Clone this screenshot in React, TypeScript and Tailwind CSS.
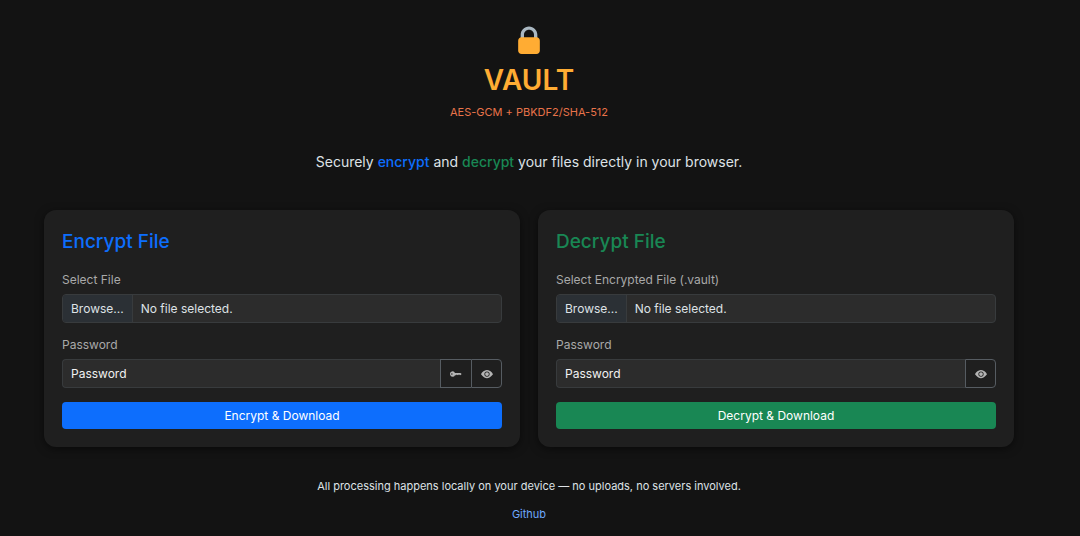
import { useState } from 'react';
import { BsEyeFill, BsKeyFill } from 'react-icons/bs';

export default function App() {
  return (
    <div className="min-h-screen bg-[#131313] pt-6 pr-[66px] pl-11 font-['Inter',sans-serif] text-[#dee2e6]">
      <header className="flex flex-col items-center text-center">
        <LockIcon />
        <h1 className="mt-2 text-[28px] leading-9 font-semibold text-[#ffac33]">VAULT</h1>
        <p className="mt-1 text-[11px] leading-5 text-[#e8734a]">AES-GCM + PBKDF2/SHA-512</p>
        <p className="mt-7 text-[14px] leading-6">
          Securely <span className="font-medium text-[#0d6efd]">encrypt</span> and{' '}
          <span className="font-medium text-[#198754]">decrypt</span> your files directly in your browser.
        </p>
      </header>

      <main className="mt-9 grid grid-cols-2 gap-[18px]">
        <Card title="Encrypt File" titleClass="text-[#0d6efd]">
          <FileField id="encrypt-file" label="Select File" />
          <PasswordField id="encrypt-password" canGenerate />
          <button type="submit" className="mt-[14px] h-[27px] w-full rounded bg-[#0d6efd] text-[12px] text-white">
            Encrypt &amp; Download
          </button>
        </Card>
        <Card title="Decrypt File" titleClass="text-[#198754]">
          <FileField id="decrypt-file" label="Select Encrypted File (.vault)" />
          <PasswordField id="decrypt-password" />
          <button type="submit" className="mt-[14px] h-[27px] w-full rounded bg-[#198754] text-[12px] text-white">
            Decrypt &amp; Download
          </button>
        </Card>
      </main>

      <footer className="mt-[29px] flex flex-col items-center gap-2 text-center">
        <p className="text-[11px] leading-5">
          All processing happens locally on your device — no uploads, no servers involved.
        </p>
        <a href="#github" className="text-[11px] leading-5 text-[#6ea8fe]">
          Github
        </a>
      </footer>
    </div>
  );
}

function Card({ title, titleClass, children }: { title: string; titleClass: string; children: React.ReactNode }) {
  return (
    <form
      onSubmit={(e) => e.preventDefault()}
      className="rounded-xl bg-[#1f1f1f] p-[18px] shadow-[0_2px_8px_rgba(0,0,0,0.5)]"
    >
      <h2 className={`mb-[14px] text-[19px] leading-7 font-medium ${titleClass}`}>{title}</h2>
      {children}
    </form>
  );
}

function FileField({ id, label }: { id: string; label: string }) {
  const [fileName, setFileName] = useState('');

  return (
    <div className="relative">
      <label htmlFor={id} className="mb-1 block text-[12px] leading-5 text-[#a9a9a9]">
        {label}
      </label>
      <input
        id={id}
        type="file"
        className="sr-only"
        onChange={(e) => setFileName(e.target.files?.[0]?.name ?? '')}
      />
      <label
        htmlFor={id}
        className="flex h-[29px] items-stretch overflow-hidden rounded border border-[#383b3d] bg-[#2c2c2c] text-[12px]"
      >
        <span className="flex items-center border-r border-[#383b3d] bg-[#2b3035] px-2">Browse...</span>
        <span className="flex items-center px-2">{fileName || 'No file selected.'}</span>
      </label>
    </div>
  );
}

function PasswordField({ id, canGenerate }: { id: string; canGenerate?: boolean }) {
  const [password, setPassword] = useState('');
  const [visible, setVisible] = useState(false);

  const generate = () => {
    const bytes = crypto.getRandomValues(new Uint8Array(18));
    setPassword(btoa(String.fromCharCode(...bytes)));
  };

  return (
    <div className="mt-3">
      <label htmlFor={id} className="mb-1 block text-[12px] leading-5 text-[#a9a9a9]">
        Password
      </label>
      <div className="flex h-[29px]">
        <input
          id={id}
          type={visible ? 'text' : 'password'}
          value={password}
          onChange={(e) => setPassword(e.target.value)}
          placeholder="Password"
          className="min-w-0 flex-1 rounded-l border border-r-0 border-[#383b3d] bg-[#2c2c2c] px-2 text-[12px] text-[#f1f1f1] placeholder:text-[#f1f1f1]"
        />
        {canGenerate && (
          <button
            type="button"
            aria-label="Generate password"
            onClick={generate}
            className="flex w-[31px] items-center justify-center border border-r-0 border-[#565c62] text-[#b4b4b4]"
          >
            <BsKeyFill className="size-3" />
          </button>
        )}
        <button
          type="button"
          aria-label="Show password"
          onClick={() => setVisible(!visible)}
          className="flex w-[31px] items-center justify-center rounded-r border border-[#565c62] text-[#b4b4b4]"
        >
          <BsEyeFill className="size-3" />
        </button>
      </div>
    </div>
  );
}

function LockIcon() {
  return (
    <svg viewBox="0 0 36 36" className="size-[30px]" aria-hidden="true">
      <path
        fill="#AAB8C2"
        d="M18 3C12.477 3 8 7.477 8 13v10h4V13c0-3.313 2.686-6 6-6s6 2.687 6 6v10h4V13c0-5.523-4.477-10-10-10z"
      />
      <path
        fill="#FFAC33"
        d="M31 32c0 2.209-1.791 4-4 4H9c-2.209 0-4-1.791-4-4V20c0-2.209 1.791-4 4-4h18c2.209 0 4 1.791 4 4v12z"
      />
    </svg>
  );
}
